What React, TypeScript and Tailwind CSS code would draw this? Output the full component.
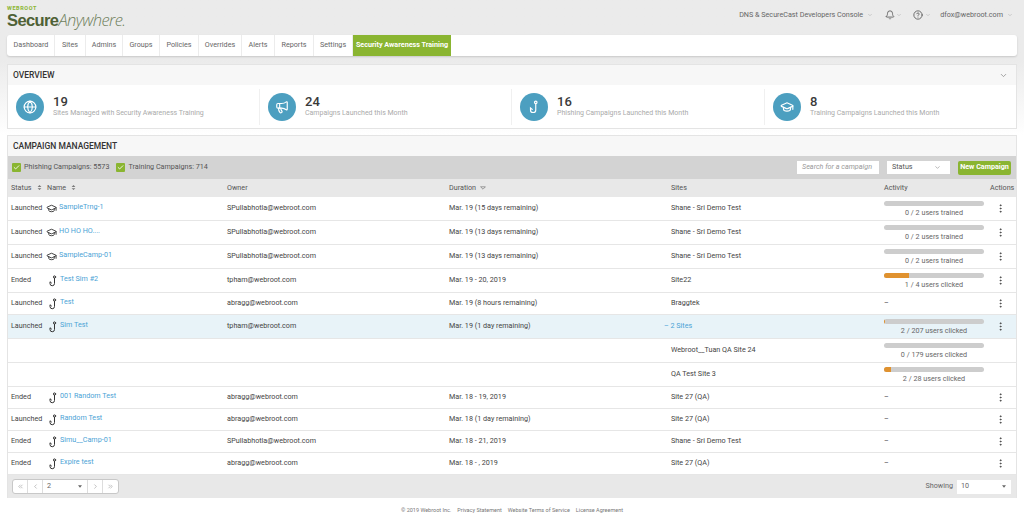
import React from 'react'
import {
  Bell,
  Check,
  ChevronDown,
  ChevronLeft,
  ChevronRight,
  ChevronsLeft,
  ChevronsRight,
  CircleHelp,
  EllipsisVertical,
  Globe,
  GraduationCap,
  Megaphone,
} from 'lucide-react'

const tabs = [
  { label: 'Dashboard', width: 'w-[47px]' },
  { label: 'Sites', width: 'w-[31px]' },
  { label: 'Admins', width: 'w-[37px]' },
  { label: 'Groups', width: 'w-[37px]' },
  { label: 'Policies', width: 'w-[39px]' },
  { label: 'Overrides', width: 'w-[43px]' },
  { label: 'Alerts', width: 'w-[33px]' },
  { label: 'Reports', width: 'w-[39px]' },
  { label: 'Settings', width: 'w-[39px]' },
]

function HookIcon({ className }: { className?: string }) {
  return (
    <svg viewBox="0 0 24 24" fill="none" stroke="currentColor" strokeWidth="2" strokeLinecap="round" className={className}>
      <circle cx="15" cy="4" r="2.2" />
      <path d="M15 6.5V17a4.5 4.5 0 0 1-9 0v-3.5l3 2.5" />
    </svg>
  )
}

function SortDot() {
  return (
    <svg viewBox="0 0 8 8" className="ml-[5px] h-[5px] w-[5px] text-[#777]" fill="currentColor">
      <path d="M4 0 7 3H1zM4 8 1 5h6z" />
    </svg>
  )
}

const stats = [
  { value: '19', label: 'Sites Managed with Security Awareness Training', icon: Globe, width: 'w-[252px]' },
  { value: '24', label: 'Campaigns Launched this Month', icon: Megaphone, width: 'w-[252px]' },
  { value: '16', label: 'Phishing Campaigns Launched this Month', icon: HookIcon, width: 'w-[253px]' },
  { value: '8', label: 'Training Campaigns Launched this Month', icon: GraduationCap, width: 'flex-1' },
]

type Row = {
  status?: string
  kind?: 'cap' | 'hook'
  name?: string
  owner?: string
  duration?: string
  site: string
  siteLink?: boolean
  done?: number
  total?: number
  verb?: string
  actions?: boolean
  active?: boolean
}

const rows: Row[] = [
  { status: 'Launched', kind: 'cap', name: 'SampleTrng-1', owner: 'SPullabhotla@webroot.com', duration: 'Mar. 19 (15 days remaining)', site: 'Shane - Sri Demo Test', done: 0, total: 2, verb: 'trained', actions: true },
  { status: 'Launched', kind: 'cap', name: 'HO HO HO....', owner: 'SPullabhotla@webroot.com', duration: 'Mar. 19 (13 days remaining)', site: 'Shane - Sri Demo Test', done: 0, total: 2, verb: 'trained', actions: true },
  { status: 'Launched', kind: 'cap', name: 'SampleCamp-01', owner: 'SPullabhotla@webroot.com', duration: 'Mar. 19 (13 days remaining)', site: 'Shane - Sri Demo Test', done: 0, total: 2, verb: 'trained', actions: true },
  { status: 'Ended', kind: 'hook', name: 'Test Sim #2', owner: 'tpham@webroot.com', duration: 'Mar. 19 - 20, 2019', site: 'Site22', done: 1, total: 4, verb: 'clicked', actions: true },
  { status: 'Launched', kind: 'hook', name: 'Test', owner: 'abragg@webroot.com', duration: 'Mar. 19 (8 hours remaining)', site: 'Braggtek', actions: true },
  { status: 'Launched', kind: 'hook', name: 'Sim Test', owner: 'tpham@webroot.com', duration: 'Mar. 19 (1 day remaining)', site: '2 Sites', siteLink: true, done: 2, total: 207, verb: 'clicked', actions: true, active: true },
  { site: 'Webroot__Tuan QA Site 24', done: 0, total: 179, verb: 'clicked' },
  { site: 'QA Test Site 3', done: 2, total: 28, verb: 'clicked' },
  { status: 'Ended', kind: 'hook', name: '001 Random Test', owner: 'abragg@webroot.com', duration: 'Mar. 18 - 19, 2019', site: 'Site 27 (QA)', actions: true },
  { status: 'Launched', kind: 'hook', name: 'Random Test', owner: 'abragg@webroot.com', duration: 'Mar. 18 (1 day remaining)', site: 'Site 27 (QA)', actions: true },
  { status: 'Ended', kind: 'hook', name: 'Simu__Camp-01', owner: 'SPullabhotla@webroot.com', duration: 'Mar. 18 - 21, 2019', site: 'Shane - Sri Demo Test', actions: true },
  { status: 'Ended', kind: 'hook', name: 'Expire test', owner: 'abragg@webroot.com', duration: 'Mar. 18 - , 2019', site: 'Site 27 (QA)', actions: true },
]

const grid = 'grid grid-cols-[36px_180px_222px_222px_213px_106px_1fr] items-center pl-[3px]'

function Activity({ row }: { row: Row }) {
  if (row.total === undefined) return <span>–</span>
  return (
    <div className="flex w-[100px] flex-col items-center">
      <div className="h-[5px] w-full overflow-hidden rounded-full bg-[#cdcdcd]">
        <div className="h-full bg-[#e0922f]" style={{ width: `${((row.done ?? 0) / row.total) * 100}%` }} />
      </div>
      <span className="mt-[2px] leading-[9px] text-[#666]">
        {row.done} / {row.total} users {row.verb}
      </span>
    </div>
  )
}

function TableRow({ row }: { row: Row }) {
  const height = row.total !== undefined ? 'h-[24px]' : 'h-[22px]'
  return (
    <div className={`${grid} ${height} border-b border-[#e6e6e6] ${row.active ? 'bg-[#e8f3f8]' : 'bg-white'}`}>
      <span>{row.status}</span>
      <div className="flex items-center">
        {row.kind === 'cap' && <GraduationCap className="ml-[-1px] mr-[2px] h-[11px] w-[11px] text-[#333]" />}
        {row.kind === 'hook' && <HookIcon className="mr-[1px] h-[12px] w-[12px] text-[#333]" />}
        <span className="-mt-[2px] text-[#4ba3d6]">{row.name}</span>
      </div>
      <span>{row.owner}</span>
      <span>{row.duration}</span>
      {row.siteLink ? (
        <span className="-ml-[7px] text-[#4ba3d6]">– {row.site}</span>
      ) : (
        <span>{row.site}</span>
      )}
      <Activity row={row} />
      <div className="flex justify-center pr-[6px]">
        {row.actions && <EllipsisVertical className="h-[11px] w-[11px] text-[#444]" />}
      </div>
    </div>
  )
}

function Checked({ label }: { label: string }) {
  return (
    <div className="flex items-center gap-[2px]">
      <span className="flex h-[9px] w-[9px] items-center justify-center rounded-[1px] bg-[#8ab531]">
        <Check className="h-[7px] w-[7px] text-white" strokeWidth={3} />
      </span>
      <span className="ml-[1px] text-[#555]">{label}</span>
    </div>
  )
}

export default function App() {
  return (
    <div className="h-[517px] w-[1024px] overflow-hidden bg-gradient-to-b from-[#ebebeb] from-[60px] to-white to-[135px] font-['Roboto',sans-serif] text-[7.2px] text-[#444]">
      {/* top bar */}
      <div className="flex h-[35px] items-start justify-between pl-[7px] pr-[11px]">
        <div className="pt-[5px]">
          <div className="text-[5.5px] font-bold leading-[6px] tracking-[0.6px] text-[#8ab531]">WEBROOT</div>
          <div className="flex items-baseline font-['Liberation_Sans',sans-serif] text-[16.5px] leading-[17px] tracking-[-0.6px]">
            <span className="font-bold text-[#4f6136]">Secure</span>
            <span className="font-['Open_Sans',sans-serif] font-light italic text-[#6f7f5c]">Anywhere.</span>
          </div>
        </div>
        <div className="flex items-center pt-[10px] text-[#666]">
          <span>DNS &amp; SecureCast Developers Console</span>
          <ChevronDown className="ml-[4px] h-[6px] w-[6px] text-[#aaa]" />
          <Bell className="ml-[12px] h-[10px] w-[10px] text-[#555]" />
          <ChevronDown className="ml-[1px] h-[6px] w-[6px] text-[#aaa]" />
          <CircleHelp className="ml-[11px] h-[10px] w-[10px] text-[#555]" />
          <ChevronDown className="ml-[2px] h-[6px] w-[6px] text-[#aaa]" />
          <span className="ml-[9px]">dfox@webroot.com</span>
          <ChevronDown className="ml-[4px] h-[6px] w-[6px] text-[#aaa]" />
        </div>
      </div>

      <div className="flex flex-col px-[7px]">
        {/* main nav */}
        <div className="flex h-[21px] rounded-[3px] bg-white pl-[1px] shadow-[0_1px_2px_rgba(0,0,0,0.15)]">
          {tabs.map((tab) => (
            <div key={tab.label} className={`flex items-center justify-center border-r border-[#ececec] text-[#666] ${tab.width}`}>
              {tab.label}
            </div>
          ))}
          <div className="flex w-[98px] items-center justify-center bg-[#8ab531] font-bold text-white">
            Security Awareness Training
          </div>
        </div>

        {/* overview */}
        <div className="mt-[8px] h-[65px] border border-[#e4e4e4] bg-white">
          <div className="flex h-[20px] items-center justify-between bg-[#f7f7f7] pl-[5px] pr-[8px]">
            <span className="text-[8.5px] font-medium text-[#333]">OVERVIEW</span>
            <ChevronDown className="h-[9px] w-[9px] text-[#888]" />
          </div>
          <div className="flex h-[43px] items-center">
            {stats.map((stat, i) => (
              <div key={stat.value} className={`flex h-[36px] items-center pl-[8px] ${stat.width} ${i < 3 ? 'border-r border-[#f0f0f0]' : ''}`}>
                <div className="flex h-[28px] w-[28px] shrink-0 items-center justify-center rounded-full bg-[#4c9fc0]">
                  <stat.icon className="h-[14px] w-[14px] text-white" />
                </div>
                <div className="ml-[9px]">
                  <div className="text-[13px] font-medium leading-[14px] text-[#3a3a3a]">{stat.value}</div>
                  <div className="text-[7px] leading-[9px] text-[#aaa]">{stat.label}</div>
                </div>
              </div>
            ))}
          </div>
        </div>

        {/* campaign management */}
        <div className="mt-[6px] border-x border-t border-[#e4e4e4] bg-white">
          <div className="flex h-[20px] items-center bg-[#f7f7f7] pl-[5px]">
            <span className="text-[8.5px] font-medium text-[#333]">CAMPAIGN MANAGEMENT</span>
          </div>
          <div className="flex h-[23px] items-center justify-between bg-[#d3d3d3] pl-[4px] pr-[5px]">
            <div className="flex items-center gap-[7px]">
              <Checked label="Phishing Campaigns: 5573" />
              <Checked label="Training Campaigns: 714" />
            </div>
            <div className="flex items-center">
              <div className="flex h-[13px] w-[82px] items-center bg-white pl-[5px] italic text-[#999]">Search for a campaign</div>
              <div className="ml-[8px] flex h-[13px] w-[63px] items-center justify-between bg-white pl-[5px] pr-[9px] text-[#555]">
                Status
                <ChevronDown className="h-[7px] w-[7px] text-[#888]" />
              </div>
              <div className="ml-[8px] flex h-[14px] w-[53px] items-center justify-center rounded-[2px] bg-[#8ab531] font-bold text-white">
                New Campaign
              </div>
            </div>
          </div>
          <div className={`${grid} h-[18px] bg-[#e8e8e8] text-[#555]`}>
            <span className="flex items-center">Status<SortDot /></span>
            <span className="flex items-center">Name<SortDot /></span>
            <span>Owner</span>
            <span className="flex items-center">
              Duration
              <svg viewBox="0 0 10 6" className="ml-[4px] h-[4px] w-[6px] text-[#666]" fill="none" stroke="currentColor">
                <path d="M1 1h8L5 5z" />
              </svg>
            </span>
            <span>Sites</span>
            <span>Activity</span>
            <span>Actions</span>
          </div>
          {rows.map((row, i) => (
            <TableRow key={i} row={row} />
          ))}
          <div className="flex h-[23px] items-center justify-between bg-[#e8e8e8] pl-[4px] pr-[5px]">
            <div className="flex h-[15px] items-center rounded-[3px] border border-[#c8c8c8] bg-white text-[#666]">
              <span className="flex h-full w-[15px] items-center justify-center border-r border-[#ddd]"><ChevronsLeft className="h-[7px] w-[7px] text-[#999]" /></span>
              <span className="flex h-full w-[15px] items-center justify-center border-r border-[#ddd]"><ChevronLeft className="h-[7px] w-[7px] text-[#999]" /></span>
              <span className="flex h-full w-[45px] items-center justify-between border-r border-[#ddd] pl-[4px] pr-[5px]">
                2
                <svg viewBox="0 0 6 4" className="h-[3px] w-[4px] text-[#666]" fill="currentColor"><path d="M0 0h6L3 4z" /></svg>
              </span>
              <span className="flex h-full w-[15px] items-center justify-center border-r border-[#ddd]"><ChevronRight className="h-[7px] w-[7px] text-[#999]" /></span>
              <span className="flex h-full w-[15px] items-center justify-center"><ChevronsRight className="h-[7px] w-[7px] text-[#999]" /></span>
            </div>
            <div className="flex items-center">
              <span className="text-[#666]">Showing</span>
              <div className="ml-[4px] flex h-[14px] w-[54px] items-center justify-between bg-white pl-[4px] pr-[5px] text-[#666]">
                10
                <svg viewBox="0 0 6 4" className="h-[3px] w-[4px] text-[#666]" fill="currentColor"><path d="M0 0h6L3 4z" /></svg>
              </div>
            </div>
          </div>
        </div>

        {/* footer */}
        <div className="mt-[8px] flex justify-center gap-[6px] text-[5.5px] text-[#777]">
          <span>© 2019 Webroot Inc.</span>
          <span>Privacy Statement</span>
          <span>Website Terms of Service</span>
          <span>License Agreement</span>
        </div>
      </div>
    </div>
  )
}
